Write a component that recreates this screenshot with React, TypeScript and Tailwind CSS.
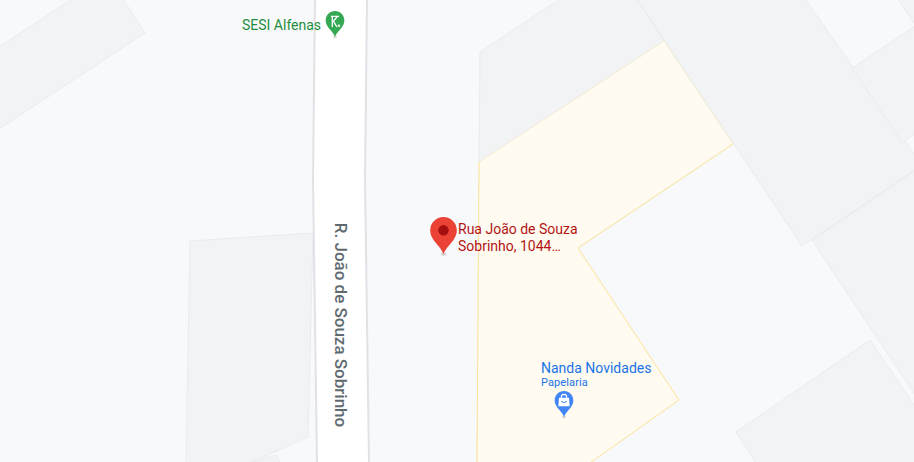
const building = "fill-[#f1f3f4] stroke-[#e9ebee]";

const buildings = [
  "72,-1 -1,47 -1,129 145,33 123,-1",
  "480,52 560,-1 637,-1 664,41 479,162",
  "637,-1 805,-1 922,165 802,246",
  "898,-1 915,-1 915,24",
  "852,68 915,26 915,134 902,142",
  "812,240 915,171 915,395",
  "870,340 915,406 915,463 756,463 736,432",
  "190,241 313,233 308,437 250,463 186,463",
  "250,463 276,455 280,463",
];

function Map() {
  return (
    <svg className="absolute inset-0" width="914" height="462" viewBox="0 0 914 462">
      {buildings.map((points) => (
        <polygon key={points} points={points} className={building} strokeWidth="1" />
      ))}
      <polygon
        points="479,162 664,41 733,144 578,248 679,400 590,463 477,463"
        className="fill-[#fffbf0] stroke-[#f5ecd5]"
        strokeWidth="1"
      />
      <polyline points="733,144 578,248 679,400 590,463" className="fill-none stroke-[#fde5a3]" strokeWidth="1" />
      <polyline points="477,463 479,162" className="fill-none stroke-[#fde5a3]" strokeWidth="1" />
      <polygon
        points="315,-1 367,-1 365,180 369,463 317,463 313,180"
        className="fill-white stroke-[#e0e2e6]"
        strokeWidth="2"
      />
    </svg>
  );
}

function Pin({ color, className, children }: { color: string; className: string; children?: React.ReactNode }) {
  return (
    <svg className={`absolute ${className}`} viewBox="0 0 28 42">
      <ellipse cx="14" cy="39" rx="3" ry="1.8" fill="#000" opacity="0.14" />
      <path
        d="M14 0C6.3 0 0 6.2 0 14c0 4.1 1.5 7 3.7 10.300C7.700 29.700 12 33 14 39c2-6 6.300-9.300 10.300-14.700C26.500 21 28 18.100 28 14 28 6.200 21.700 0 14 0Z"
        fill={color}
      />
      {children}
    </svg>
  );
}

export default function App() {
  return (
    <div className="relative h-[462px] w-[914px] overflow-hidden bg-[#f8f9fb] font-['Roboto',sans-serif]">
      <Map />

      <span className="absolute left-[242px] top-[17px] text-[14px] leading-[17px] whitespace-nowrap text-[#1e8e3e]">
        SESI Alfenas
      </span>
      <Pin color="#34a853" className="left-[325px] top-[11px] h-[28px] w-[20px]">
        <path d="M8 8h12M10 8v16M11 16l6-7M12 16l5 8" stroke="#fff" strokeWidth="2" fill="none" />
        <circle cx="20" cy="22" r="1.800" fill="#fff" />
      </Pin>

      <span className="absolute left-[238px] top-[315px] w-[205px] origin-center rotate-90 text-center text-[17px] leading-[20px] font-medium whitespace-nowrap text-[#5f6a70]">
        R. João de Souza Sobrinho
      </span>

      <Pin color="#ea4335" className="left-[430px] top-[217px] h-[40px] w-[27px]">
        <circle cx="14" cy="14" r="5.500" fill="#a50e0e" />
      </Pin>
      <div className="absolute left-[458px] top-[221px] text-[14px] leading-[17px] whitespace-nowrap text-[#b31412]">
        <div>Rua João de Souza</div>
        <div>Sobrinho, 1044…</div>
      </div>

      <div className="absolute left-[541px] top-[360px] flex flex-col whitespace-nowrap text-[#1a73e8]">
        <span className="text-[14px] leading-[16px]">Nanda Novidades</span>
        <span className="text-[11px] leading-[13px] tracking-[0.1px]">Papelaria</span>
      </div>
      <Pin color="#4285f4" className="left-[554px] top-[391px] h-[28px] w-[20px]">
        <path d="M6.500 10h15l1 13h-17Z" fill="#fff" />
        <path d="M10 10V9a4 4 0 0 1 8 0v1" stroke="#fff" strokeWidth="1.800" fill="none" />
        <path d="M10 15c1.500 3 6.500 3 8 0" stroke="#4285f4" strokeWidth="1.600" fill="none" />
      </Pin>
    </div>
  );
}
